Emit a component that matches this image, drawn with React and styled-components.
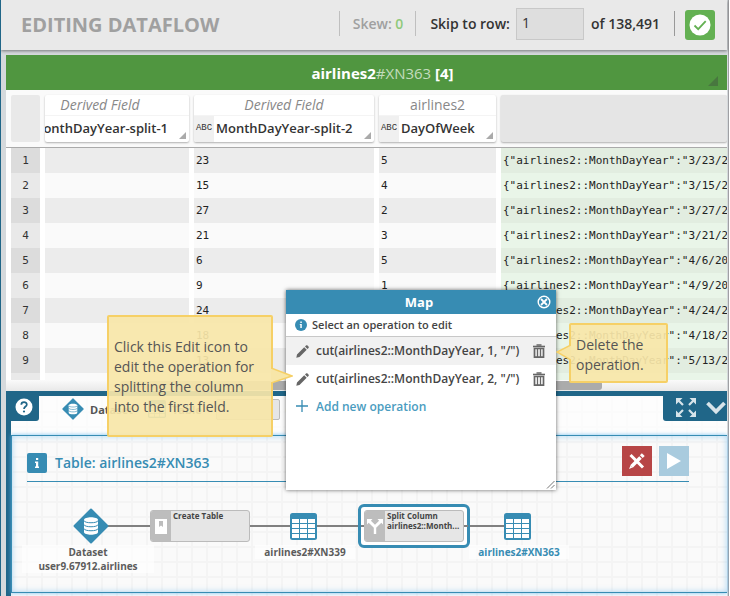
import React from "react";
import styled, { createGlobalStyle, css } from "styled-components";

const blue = "#378cb3";
const navy = "#206688";
const sans = '"Open Sans", "Noto Sans", sans-serif';

const Global = createGlobalStyle`
  *, *::before, *::after { box-sizing: border-box; }
  body { margin: 0; font-family: ${sans}; color: #222; overflow: hidden; }
  button, input { font-family: inherit; margin: 0; }
  button { border: 0; padding: 0; background: none; cursor: pointer; color: inherit; }
  svg { display: block; flex: none; }
  h1, h2, p { margin: 0; }
`;

const Page = styled.div`
  position: relative;
  min-height: 100vh;
  display: flex;
  flex-direction: column;
  background: #d5d9dc;
  border-left: 1px solid ${navy};
  border-right: 1px solid #fff;
  overflow: hidden;
`;

const Shell = styled.div`
  flex: 1;
  display: flex;
  flex-direction: column;
  border-right: 1px solid #a0a0a4;
  padding-right: 1px;
`;

/* ---------- top bar ---------- */

const TopBar = styled.header`
  display: flex;
  align-items: center;
  height: 50px;
  padding: 0 0 3px 20px;
  background: #e9e9e9;
  box-shadow: 0 1px 3px rgba(0, 0, 0, 0.45);
  font-size: 14px;
  font-weight: 600;
  white-space: nowrap;
  overflow: hidden;
`;

const TopWrap = styled.div`
  padding-bottom: 5px;
`;

const PageTitle = styled.h1`
  padding-top: 3px;
  font-size: 20px;
  font-weight: 700;
  line-height: 24px;
  color: #a0a0a0;
`;

const TopTools = styled.div`
  display: flex;
  align-items: center;
  margin-left: auto;
`;

const Rule = styled.span`
  width: 1px;
  height: 25px;
  background: ${(p) => (p.$dark ? "#999" : "#bfbfbf")};
`;

const Skew = styled.span`
  margin: 0 12px 0 13px;
  color: #a0a0a0;
  b { font-weight: 600; color: #90c97c; }
`;

const SkipLabel = styled.label`
  display: flex;
  align-items: center;
  gap: 6px;
  margin-left: 14px;
  color: #333;
`;

const RowInput = styled.input`
  width: 68px;
  height: 32px;
  padding: 0 5px 2px;
  border: 1px solid #c8c8c8;
  border-radius: 0;
  background: #dedede;
  font-size: 14px;
  color: #333;
`;

const RowTotal = styled.span`
  margin: 0 14px 0 7px;
  color: #333;
`;

const CheckButton = styled.button`
  display: grid;
  place-items: center;
  width: 30px;
  height: 30px;
  margin: 3px 12px 0 10px;
  border-radius: 3px;
  background: #63b052;
`;

/* ---------- data table ---------- */

const TableArea = styled.section`
  margin-left: 5px;
  background: #fdfdfd;
`;

const GreenBar = styled.div`
  position: relative;
  height: 35px;
  padding-left: 32px;
  background: #509640;
  color: #fff;
  font-size: 15px;
  line-height: 37px;
  font-weight: 700;
  text-align: center;
  span { font-weight: 400; color: #c3dcbd; }
`;

const Corner = styled.i`
  position: absolute;
  right: ${(p) => p.$r}px;
  bottom: ${(p) => p.$b}px;
  border-left: ${(p) => p.$size}px solid transparent;
  border-bottom: ${(p) => p.$size}px solid ${(p) => p.$color};
`;

const Clip = styled.div`
  height: 290px;
  overflow: hidden;
`;

const Data = styled.table`
  width: 100%;
  table-layout: fixed;
  border-collapse: separate;
  border-spacing: 0;
`;

const Col = styled.col`
  width: ${(p) => (p.$w ? `${p.$w}px` : "auto")};
`;

const HeadCell = styled.th`
  height: 58px;
  padding: 5px ${(p) => (p.$last ? 0 : 5)}px 5px ${(p) => (p.$first ? 5 : 0)}px;
  border-bottom: 1px solid #aaa;
  background: #fafafa;
  font-weight: 400;
`;

const HeadBox = styled.div`
  position: relative;
  height: 47px;
  background: ${(p) => p.$bg || "#fff"};
  border-radius: 2px;
  overflow: hidden;
  box-shadow: ${(p) => (p.$flat ? "none" : "0 1px 2px rgba(0, 0, 0, 0.3)")};
`;

const Prefix = styled.div`
  height: 21px;
  border-bottom: 1px solid #f4f4f4;
  font-size: 14px;
  line-height: 20px;
  text-align: center;
  padding-right: ${(p) => p.$pad || 0}px;
  color: #888;
  font-style: ${(p) => (p.$italic ? "italic" : "normal")};
`;

const Field = styled.div`
  display: flex;
  height: 26px;
  font-size: 13px;
  line-height: 25px;
  font-weight: 600;
  white-space: nowrap;
  color: #333;
  justify-content: flex-start;
  ${(p) => p.$cut && css`
    justify-content: flex-end;
    padding-right: 21px;
  `}
`;

const TypeTag = styled.span`
  width: 20px;
  margin-right: 2px;
  background: #f0f0f0;
  text-align: center;
  font-family: "Liberation Mono", monospace;
  font-size: 9px;
  font-weight: 400;
`;

const mono = css`
  font-family: "DejaVu Sans Mono", monospace;
  font-size: 11px;
  line-height: 24px;
`;

const RowNumber = styled.th`
  ${mono}
  height: 25px;
  padding: 1px 0 0;
  border-left: 5px solid #fff;
  border-right: 5px solid #fff;
  font-weight: 400;
  color: #333;
  background: #e9e9e9;
`;

const Cell = styled.td`
  ${mono}
  height: 25px;
  padding: 1px 0 0 2px;
  border-right: ${(p) => (p.$json ? 0 : 5)}px solid #fff;
  color: #222;
  white-space: nowrap;
  overflow: hidden;
  background: ${(p) => (p.$json ? "#e9f5e8" : "#fafafa")};
`;

const Row = styled.tr`
  &:nth-child(odd) ${RowNumber} { background: #dcdcdc; }
  &:nth-child(odd) ${Cell} { background: #ececec; }
  &:nth-child(odd) ${Cell}:last-child { background: #e2ede0; }
`;

const ScrollTrack = styled.div`
  height: 11px;
  padding: 1px 125px 1px 114px;
  background: linear-gradient(#fafafa, #e8e8e8);
`;

const ScrollThumb = styled.div`
  height: 9px;
  border-radius: 3px;
  background: #ababab;
`;

/* ---------- dataflow panel ---------- */

const FlowArea = styled.section`
  flex: 1;
  display: flex;
  flex-direction: column;
  margin-left: 5px;
  border-top: 5px solid ${navy};
  border-left: 5px solid ${navy};
  padding-bottom: 3px;
  background-color: #fafafa;
  background-image:
    linear-gradient(#f4f4f4 2px, transparent 2px),
    linear-gradient(90deg, #f4f4f4 2px, transparent 2px);
  background-size: 15px 15px;
`;

const Legend = styled.div`
  display: flex;
  align-items: flex-start;
  height: 39px;
  background: rgba(255, 255, 255, 0.6);
  font-size: 11px;
  font-weight: 700;
  color: #555;
`;

const Tab = styled.div`
  display: flex;
  align-items: center;
  justify-content: center;
  width: 28px;
  height: 25px;
  padding: 0 2px 4px 0;
  background: ${navy};
  border-radius: 0 0 3px 0;
`;

const PanelTab = styled(Tab)`
  justify-content: flex-end;
  gap: 10px;
  width: 64px;
  margin-left: auto;
  padding: 0 1px 2px 0;
  border-radius: 0 0 0 3px;
`;

const LegendItem = styled.span`
  display: flex;
  align-items: center;
  gap: 6px;
  height: 26px;
  margin-left: ${(p) => p.$ml}px;
`;

const LegendBox = styled.span`
  width: 64px;
  height: 21px;
  border: 1px solid #bbb;
  border-radius: 2px;
  background: #e6e6e6;
`;

const Flow = styled.div`
  position: relative;
  flex: 1;
  min-height: 158px;
  padding: 9px 38px 0 15px;
  border: 1px solid ${blue};
  border-right-width: 0;
  box-shadow: inset 0 0 6px rgba(90, 180, 240, 0.5), 0 0 4px rgba(90, 180, 240, 0.8);
`;

const FlowHead = styled.div`
  display: flex;
  align-items: center;
  height: 37px;
  padding-bottom: 5px;
  border-bottom: 1px solid ${blue};
  color: ${blue};
`;

const InfoBadge = styled.span`
  display: grid;
  place-items: center;
  width: 20px;
  height: 20px;
  margin: 4px 8px 0 0;
  border-radius: 2px;
  background: ${blue};
`;

const FlowTitle = styled.h2`
  margin-top: 4px;
  font-size: 14px;
  line-height: 20px;
  font-weight: 600;
`;

const FlowButton = styled.button`
  display: grid;
  place-items: center;
  width: 30px;
  height: 30px;
  margin-left: ${(p) => (p.$push ? "auto" : "7px")};
  background: ${(p) => p.$bg};
`;

const Node = styled.div`
  position: absolute;
  left: ${(p) => p.$x}px;
  top: ${(p) => p.$y}px;
`;

const Link = styled(Node)`
  width: ${(p) => p.$w}px;
  height: 2px;
  background: #808080;
`;

const NodeLabel = styled(Node)`
  width: ${(p) => p.$w}px;
  background: rgba(255, 255, 255, 0.6);
  font-size: 10px;
  line-height: 14px;
  font-weight: 700;
  text-align: center;
  white-space: nowrap;
  color: ${(p) => (p.$active ? blue : "#5c5c5c")};
`;

const Operation = styled(Node)`
  display: flex;
  width: 100px;
  height: 32px;
  border: 1px solid #bbb;
  border-radius: 3px;
  background: #e6e6e6;
  font-size: 8px;
  line-height: 10px;
  font-weight: 700;
  color: #444;
  white-space: nowrap;
  overflow: hidden;
`;

const OperationIcon = styled.span`
  display: grid;
  place-items: center;
  width: 20px;
  margin-right: 2px;
  background: #bdbdbd;
`;

const Selection = styled(Node)`
  width: 112px;
  height: 44px;
  border: 3px solid ${blue};
  border-radius: 6px;
  background: #fff;
`;

/* ---------- overlays ---------- */

const Dialog = styled.section`
  position: absolute;
  left: 285px;
  top: 290px;
  width: 270px;
  height: 200px;
  background: #fff;
  box-shadow: 0 0 4px rgba(0, 0, 0, 0.6);
  color: #444;
`;

const DialogHead = styled.div`
  display: flex;
  align-items: center;
  height: 24px;
  padding: 0 5px;
  background: ${blue};
  color: #fff;
  h2 { flex: 1; padding-left: 10px; text-align: center; font-size: 13px; line-height: 24px; font-weight: 700; }
`;

const Hint = styled.p`
  display: flex;
  align-items: center;
  gap: 5px;
  height: 23px;
  padding: 0 0 1px 9px;
  border-bottom: 1px solid #c8c8c8;
  font-size: 11px;
  font-weight: 600;
`;

const OpRow = styled.div`
  display: flex;
  align-items: center;
  height: 28px;
  padding: 0 11px 0 10px;
  background: ${(p) => (p.$active ? "#f1f1f1" : "#fff")};
  font-size: 12px;
  line-height: 16px;
  font-weight: 600;
  span { flex: 1; padding: 0 0 1px 7px; white-space: nowrap; }
`;

const AddButton = styled.button`
  display: flex;
  align-items: center;
  gap: 8px;
  height: 28px;
  padding: 0 0 2px 10px;
  font-size: 12px;
  font-weight: 600;
  color: #4a9cc0;
`;

const Grip = styled.svg`
  position: absolute;
  right: 1px;
  bottom: 1px;
`;

const Callout = styled.aside`
  position: absolute;
  left: ${(p) => p.$x}px;
  top: ${(p) => p.$y}px;
  width: ${(p) => p.$w}px;
  height: ${(p) => p.$h}px;
  padding: ${(p) => p.$pad}px 4px 0 5px;
  border: 2px solid #f6d066;
  border-radius: 2px;
  background: rgba(247, 230, 168, 0.92);
  font-size: 14px;
  line-height: 20px;
  color: #555;
`;

const Pointer = styled.svg`
  position: absolute;
  top: ${(p) => p.$y}px;
  ${(p) => (p.$left ? "left: -15px;" : "right: -22px;")}
`;

/* ---------- icons ---------- */

const CheckIcon = () => (
  <svg width="22" height="22" viewBox="0 0 22 22">
    <circle cx="11" cy="11" r="10.5" fill="#fff" />
    <path d="M5.5 11.5l3.7 3.7 7.5-8" fill="none" stroke="#63b052" strokeWidth="1.8" />
  </svg>
);

const DatasetIcon = ({ size }) => (
  <svg width={size} height={size} viewBox="0 0 36 36">
    <path d="M18 1.5L34.5 18 18 34.5 1.5 18z" fill={blue} stroke={blue} strokeWidth="2" strokeLinejoin="round" />
    <path d="M11 12c0-3.6 14-3.6 14 0v12c0 3.6-14 3.6-14 0z" fill="#fff" />
    <path d="M11 12.5c0 3 14 3 14 0M11 16.500c0 3 14 3 14 0M11 20.500c0 3 14 3 14 0" fill="none" stroke={blue} strokeWidth="1" />
  </svg>
);

const TableIcon = ({ size }) => (
  <svg width={size} height={size} viewBox="0 0 27 27">
    <rect width="27" height="27" rx="2.500" fill={blue} />
    {[2, 10, 18].map((x) =>
      [6, 11, 16, 21].map((y) => <rect key={`${x}-${y}`} x={x} y={y} width="7" height="4" fill="#fff" />)
    )}
  </svg>
);

const InfoGlyph = () => (
  <svg width="12" height="12" viewBox="0 0 12 12">
    <path d="M5 1h2.200v2H5zM4 4.500h3.200v5H8V11H4V9.500h1V6H4z" fill="#fff" />
  </svg>
);

const InfoDisc = () => (
  <svg width="12" height="12" viewBox="0 0 12 12">
    <circle cx="6" cy="6" r="6" fill={blue} />
    <path d="M5.300 2.500h1.500V4H5.300zM4.800 5h2v4h-1.500V6h-.5z" fill="#fff" />
  </svg>
);

const HelpIcon = () => (
  <svg width="18" height="18" viewBox="0 0 18 18">
    <circle cx="9" cy="9" r="8.500" fill="#fff" />
    <path d="M6.300 6.700c0-3.400 5.500-3.300 5.500-.2C11.800 8.600 9 8.500 9 11" fill="none" stroke={navy} strokeWidth="1.700" />
    <circle cx="9" cy="13.500" r="1.100" fill={navy} />
  </svg>
);

const ExpandIcon = () => (
  <svg width="20" height="19" viewBox="0 0 20 19" fill="#d7e4ea" stroke="#d7e4ea">
    <path stroke="none" d="M0 0h6.500L0 6.500zM20 0v6.500L13.500 0zM0 19v-6.500L6.500 19zM20 19h-6.500l6.500-6.500z" />
    <path strokeWidth="2.200" d="M2 2l5 5M18 2l-5 5M2 17l5-5M18 17l-5-5" />
  </svg>
);

const ChevronIcon = () => (
  <svg width="20" height="14" viewBox="0 0 20 14">
    <path d="M1.500 2L10 10.500 18.500 2" fill="none" stroke="#d7e4ea" strokeWidth="3.800" />
  </svg>
);

const ToolsIcon = () => (
  <svg width="18" height="18" viewBox="0 0 18 18" stroke="#fff" fill="none">
    <path d="M2.500 3l12.500 12.500" strokeWidth="3" />
    <path d="M3.500 14.500L12.500 5.500" strokeWidth="3.600" />
    <path d="M13.300 4.700l2-2" strokeWidth="4" />
    <path d="M1 17l1.500-3.500 2 2z" fill="#fff" stroke="none" />
  </svg>
);

const PlayIcon = () => (
  <svg width="14" height="16" viewBox="0 0 14 16">
    <path d="M0 0l14 8-14 8z" fill="#fff" />
  </svg>
);

const PageIcon = () => (
  <svg width="12" height="15" viewBox="0 0 12 15">
    <path fill="#fff" d="M0 0h12v15H0z" />
    <path fill="#bdbdbd" d="M4 2h4v6L6 6.500 4 8z" />
  </svg>
);

const SplitIcon = () => (
  <svg width="16" height="16" viewBox="0 0 16 16">
    <path d="M0 1h5.500L3.900 2.700 8 6.800l4.100-4.100L10.500 1H16v5.500l-1.700-1.700L9.200 9.800V16H6.800V9.800L1.700 4.800 0 6.500z" fill="#fff" />
  </svg>
);

const CloseIcon = () => (
  <svg width="14" height="14" viewBox="0 0 14 14" fill="none" stroke="#fff">
    <circle cx="7" cy="7" r="5.800" strokeWidth="1.400" />
    <path d="M4 4l6 6M10 4l-6 6" strokeWidth="1.800" />
  </svg>
);

const PencilIcon = () => (
  <svg width="13" height="13" viewBox="0 0 13 13" fill="#666">
    <path d="M1 9.500L8.200 2.300l2.500 2.500L3.500 12 .3 12.700zM9 1.500l1-1c.5-.5 1-.5 1.500 0l1 1c.5.5.5 1 0 1.500l-1 1z" />
  </svg>
);

const TrashIcon = () => (
  <svg width="12" height="14" viewBox="0 0 12 14" fill="none" stroke="#666">
    <path d="M0 2.500h12" strokeWidth="1.600" />
    <path d="M3.500 1h5" strokeWidth="1.500" />
    <path d="M1.500 4.500h9v8.700h-9z" strokeWidth="1.700" />
    <path d="M4.500 5v8M7.500 5v8" strokeWidth="1.300" />
  </svg>
);

const PlusIcon = () => (
  <svg width="12" height="12" viewBox="0 0 12 12">
    <path d="M6 0v12M0 6h12" stroke={blue} strokeWidth="1.300" />
  </svg>
);

/* ---------- data ---------- */

const rows = [
  ["23", "5", '{"airlines2::MonthDayYear":"3/23/2007"}'],
  ["15", "4", '{"airlines2::MonthDayYear":"3/15/2007"}'],
  ["27", "2", '{"airlines2::MonthDayYear":"3/27/2007"}'],
  ["21", "3", '{"airlines2::MonthDayYear":"3/21/2007"}'],
  ["6", "5", '{"airlines2::MonthDayYear":"4/6/2007"}'],
  ["9", "1", '{"airlines2::MonthDayYear":"4/9/2007"}'],
  ["24", "2", '{"airlines2::MonthDayYear":"4/24/2007"}'],
  ["18", "3", '{"airlines2::MonthDayYear":"4/18/2007"}'],
  ["13", "7", '{"airlines2::MonthDayYear":"5/13/2007"}'],
  ["", "", ""],
];

const operations = [1, 2].map((n) => `cut(airlines2::MonthDayYear, ${n}, "/")`);

export default function App() {
  return (
    <Page>
      <Global />
      <Shell>
        <TopWrap>
          <TopBar>
            <PageTitle>EDITING DATAFLOW</PageTitle>
            <TopTools>
              <Rule />
              <Skew>Skew: <b>0</b></Skew>
              <Rule />
              <SkipLabel>
                Skip to row:
                <RowInput defaultValue="1" />
              </SkipLabel>
              <RowTotal>of 138,491</RowTotal>
              <Rule $dark />
              <CheckButton aria-label="Saved"><CheckIcon /></CheckButton>
            </TopTools>
          </TopBar>
        </TopWrap>

        <TableArea>
          <GreenBar>
            airlines2<span>#XN363</span> [4]
            <Corner $r={9} $b={4} $size={10} $color="#48773f" />
          </GreenBar>
          <Clip>
            <Data>
              <colgroup>
                <Col $w={39} /><Col $w={149} /><Col $w={185} /><Col $w={122} /><Col />
              </colgroup>
              <thead>
                <tr>
                  <HeadCell $first><HeadBox $flat $bg="#e9e9e9" /></HeadCell>
                  <HeadCell>
                    <HeadBox>
                      <Prefix $italic $pad={34}>Derived Field</Prefix>
                      <Field $cut>MonthDayYear-split-1</Field>
                      <Corner $r={3} $b={3} $size={7} $color="#aaa" />
                    </HeadBox>
                  </HeadCell>
                  <HeadCell>
                    <HeadBox>
                      <Prefix $italic>Derived Field</Prefix>
                      <Field><TypeTag>ABC</TypeTag>MonthDayYear-split-2</Field>
                      <Corner $r={3} $b={3} $size={7} $color="#aaa" />
                    </HeadBox>
                  </HeadCell>
                  <HeadCell>
                    <HeadBox>
                      <Prefix>airlines2</Prefix>
                      <Field><TypeTag>ABC</TypeTag>DayOfWeek</Field>
                      <Corner $r={3} $b={3} $size={7} $color="#aaa" />
                    </HeadBox>
                  </HeadCell>
                  <HeadCell $last><HeadBox $bg="#e5e5e5" /></HeadCell>
                </tr>
              </thead>
              <tbody>
                {rows.map(([day, week, json], i) => (
                  <Row key={i}>
                    <RowNumber scope="row">{json ? i + 1 : ""}</RowNumber>
                    <Cell />
                    <Cell>{day}</Cell>
                    <Cell>{week}</Cell>
                    <Cell $json>{json}</Cell>
                  </Row>
                ))}
              </tbody>
            </Data>
          </Clip>
          <ScrollTrack><ScrollThumb /></ScrollTrack>
        </TableArea>

        <FlowArea>
          <Legend>
            <Tab as="button" aria-label="Help"><HelpIcon /></Tab>
            <LegendItem $ml={23}><DatasetIcon size={22} />Dataset</LegendItem>
            <LegendItem $ml={15}><TableIcon size={18} />Table</LegendItem>
            <LegendItem $ml={14}><LegendBox />Operation</LegendItem>
            <PanelTab>
              <button aria-label="Expand"><ExpandIcon /></button>
              <button aria-label="Collapse"><ChevronIcon /></button>
            </PanelTab>
          </Legend>
          <Flow>
            <FlowHead>
              <InfoBadge><InfoGlyph /></InfoBadge>
              <FlowTitle>Table: airlines2#XN363</FlowTitle>
              <FlowButton $push $bg="#b74546" aria-label="Cancel edit"><ToolsIcon /></FlowButton>
              <FlowButton $bg="#a9cbde" aria-label="Run"><PlayIcon /></FlowButton>
            </FlowHead>
            <Link $x={94} $y={89} $w={44} />
            <Link $x={238} $y={89} $w={40} />
            <Link $x={304} $y={89} $w={44} />
            <Link $x={456} $y={89} $w={36} />
            <Node $x={61} $y={72}><DatasetIcon size={36} /></Node>
            <NodeLabel $x={10} $y={109} $w={132}>Dataset<br />user9.67912.airlines</NodeLabel>
            <Operation $x={138} $y={74}>
              <OperationIcon><PageIcon /></OperationIcon>Create Table
            </Operation>
            <Node $x={278} $y={77}><TableIcon size={27} /></Node>
            <NodeLabel $x={243} $y={109} $w={100}>airlines2#XN339</NodeLabel>
            <Selection $x={346} $y={68} />
            <Link $x={349} $y={89} $w={4} />
            <Operation $x={352} $y={74}>
              <OperationIcon><SplitIcon /></OperationIcon>
              <span>Split Column<br />airlines2::Month...</span>
            </Operation>
            <Link $x={452} $y={89} $w={4} />
            <Node $x={492} $y={77}><TableIcon size={27} /></Node>
            <NodeLabel $x={457} $y={109} $w={100} $active>airlines2#XN363</NodeLabel>
          </Flow>
        </FlowArea>
      </Shell>

      <Dialog role="dialog" aria-label="Map">
        <DialogHead>
          <h2>Map</h2>
          <button aria-label="Close"><CloseIcon /></button>
        </DialogHead>
        <Hint><InfoDisc />Select an operation to edit</Hint>
        {operations.map((op, i) => (
          <OpRow key={op} $active={i === 0}>
            <button aria-label="Edit"><PencilIcon /></button>
            <span>{op}</span>
            <button aria-label="Delete"><TrashIcon /></button>
          </OpRow>
        ))}
        <AddButton><PlusIcon />Add new operation</AddButton>
        <Grip width="9" height="9" viewBox="0 0 9 9">
          <path d="M1 8.500L8.500 1M5 8.500L8.500 5" stroke="#777" />
        </Grip>
      </Dialog>

      <Callout $x={106} $y={315} $w={166} $h={122} $pad={20}>
        Click this Edit icon to edit the operation for splitting the column into the first field.
        <Pointer $y={50} width="22" height="18" viewBox="0 0 22 18">
          <path d="M0 1L21 9 0 16z" fill="#f7e6a8" />
          <path d="M0 1l21 8-21 7" fill="none" stroke="#f6d066" strokeWidth="1.500" />
        </Pointer>
      </Callout>
      <Callout $x={568} $y={323} $w={99} $h={60} $pad={10}>
        Delete the operation.
        <Pointer $left $y={19} width="15" height="18" viewBox="0 0 15 18">
          <path d="M15 1L1 8l14 8z" fill="#f7e6a8" />
          <path d="M15 1L1 8l14 8" fill="none" stroke="#f6d066" strokeWidth="1.500" />
        </Pointer>
      </Callout>
    </Page>
  );
}
